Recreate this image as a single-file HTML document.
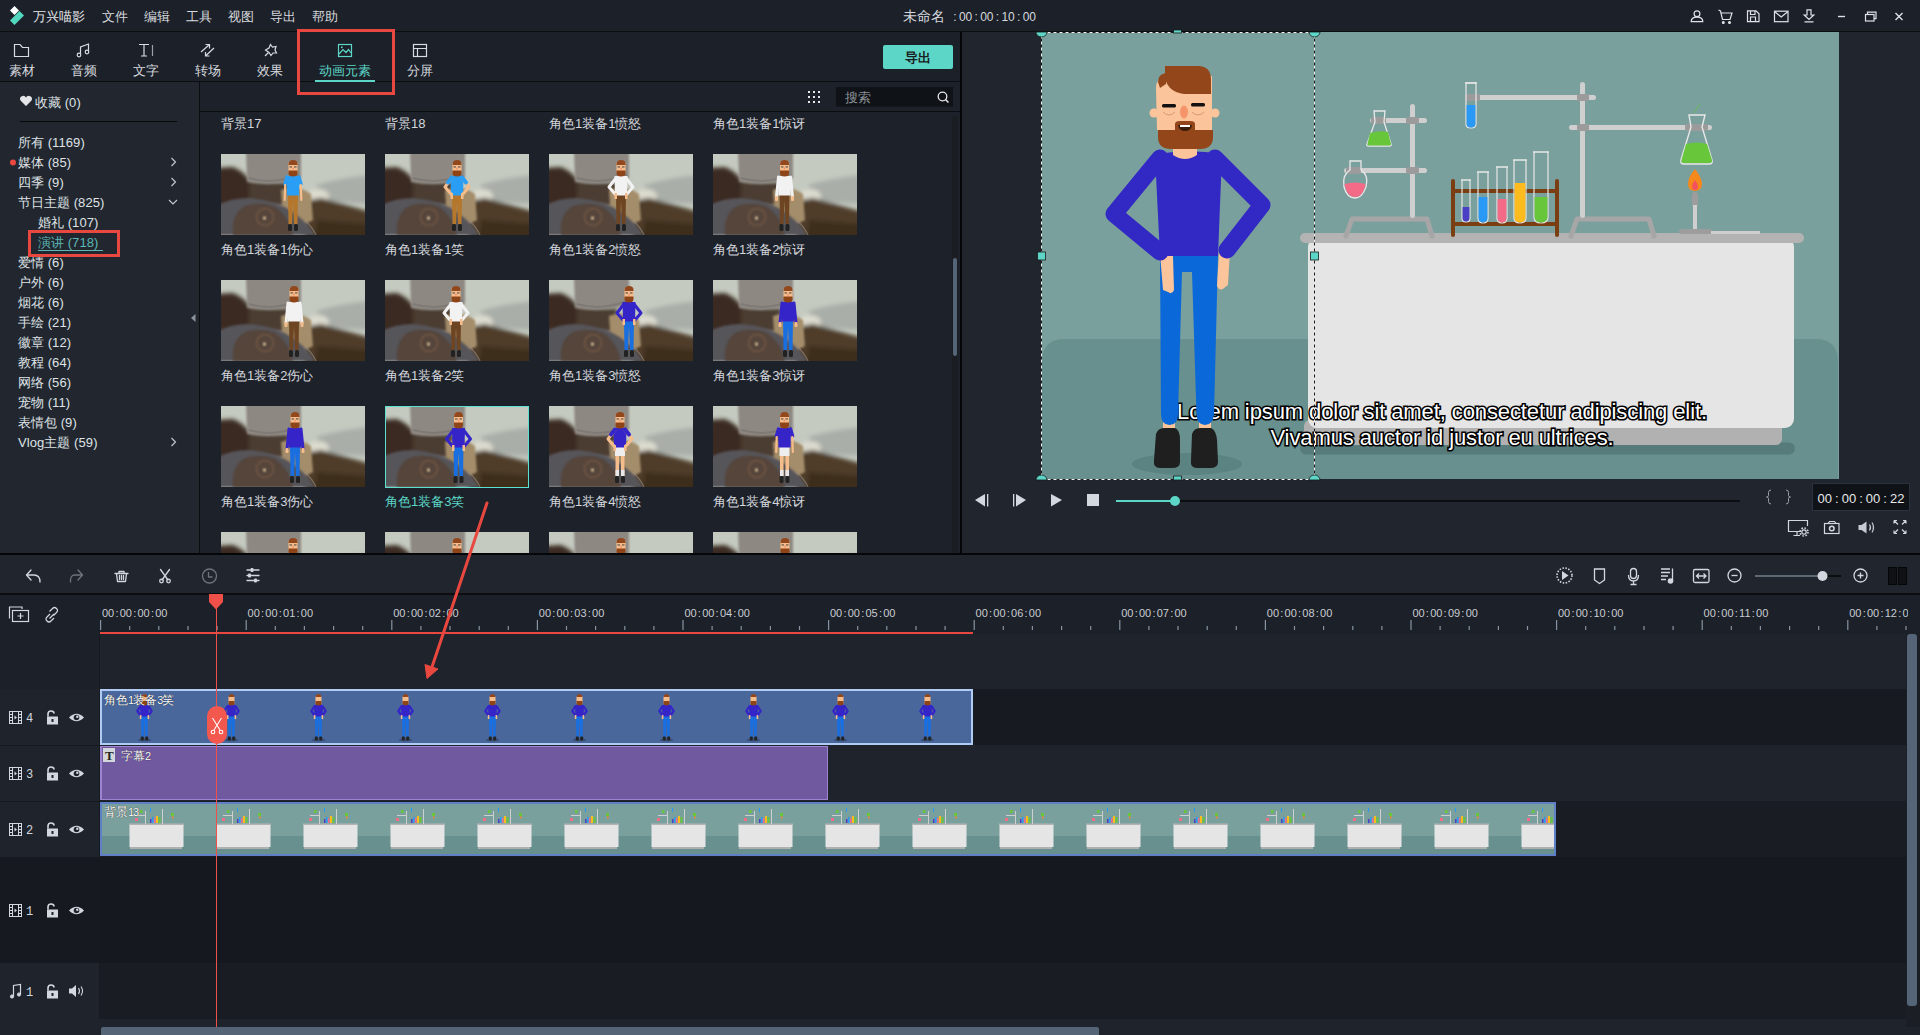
<!DOCTYPE html>
<html><head><meta charset="utf-8">
<style>
*{box-sizing:border-box;margin:0;padding:0}
html,body{width:1920px;height:1035px;overflow:hidden;background:#1c2029;font-family:"Liberation Sans",sans-serif;color:#d6d9de;font-size:13px}
.a{position:absolute}
.lb{color:#d4d7dc}
.tl{font-family:"Liberation Sans",sans-serif;font-size:11px;letter-spacing:0;color:#c9cdd3}
.tn{font-family:"Liberation Mono",monospace;font-size:12px;color:#d3d8de}
.m{font-family:"Liberation Sans",sans-serif;font-size:13px;letter-spacing:0.1px}
.t{position:absolute;white-space:nowrap;line-height:1}
svg{position:absolute;overflow:visible}
</style></head><body>
<svg width="0" height="0" style="position:absolute">
<defs>
<filter id="bl" x="-20%" y="-20%" width="140%" height="140%"><feGaussianBlur stdDeviation="2"/></filter>
<filter id="bl2" x="-20%" y="-20%" width="140%" height="140%"><feGaussianBlur stdDeviation="0.8"/></filter>
<clipPath id="pc"><rect width="144" height="81"/></clipPath>
<symbol id="photo" viewBox="0 0 144 81" width="144" height="81">
<g clip-path="url(#pc)">
<rect width="144" height="81" fill="#c4cac0"/>
<g filter="url(#bl)">
 <path d="M-5 14 L12 13 Q24 18 30 28 L32 60 L-5 60Z" fill="#3a2c20"/>
 <path d="M96 31 Q118 24 150 21 L150 50 L96 47Z" fill="#a9aea8"/>
 <ellipse cx="97" cy="42" rx="11" ry="7" fill="#dcdbcf"/>
 <path d="M84 47 L100 44 L150 58 L150 90 L84 90Z" fill="#4f3d2c"/>
 <path d="M96 66 L150 70 L150 90 L92 90Z" fill="#3d2d1f"/>
 <path d="M28 26 L68 28 L70 52 L28 52Z" fill="#4b3c31"/>
</g>
<path d="M60 36 Q76 30 90 40 L92 66 Q80 74 62 66Z" fill="#a48d6a" filter="url(#bl2)"/>
<path d="M-3 51 Q10 44 28 44 Q55 46 72 58 Q88 70 94 81 L-3 81Z" fill="#57555a" filter="url(#bl2)"/>
<path d="M12 81 Q10 60 24 52 Q40 47 54 53 Q68 62 72 81Z" fill="#54453b" filter="url(#bl2)"/>
<path d="M25 -3 H80 L80 24 Q55 34 26 28Z" fill="#8d8882" filter="url(#bl2)"/>
<path d="M28 24 Q52 31 78 21" stroke="#77726c" stroke-width="2" fill="none" opacity="0.6"/>
<path d="M84 66 Q92 74 95 81" stroke="#9a8e80" stroke-width="1.2" fill="none" opacity="0.6"/>
<circle cx="44" cy="63" r="8.5" fill="none" stroke="#9a6e50" stroke-width="2" opacity="0.35" filter="url(#bl2)"/>
<circle cx="43.5" cy="64" r="1.5" fill="#f0d8a8" filter="url(#bl2)"/>
</g>
</symbol>
</defs></svg>

<!-- ============ MENU BAR ============ -->
<div class="a" style="left:0;top:0;width:1920px;height:31px;background:#1c2029"></div>
<div class="a" style="left:0;top:31px;width:1920px;height:1px;background:#0b0d10"></div>
<!-- logo -->
<svg style="left:0;top:0" width="40" height="31"><path d="M14.5 6 L19 10.5 L14.5 15 L10 10.5Z" fill="#fff"/><path d="M19.5 11 L24 15.5 L14.5 25 L10 20.5Z" fill="#52d8bf"/></svg>
<div id="menu">
<span class="t" style="left:33px;top:10px;color:#e6e8ea">万兴喵影</span>
<span class="t" style="left:102px;top:10px">文件</span>
<span class="t" style="left:144px;top:10px">编辑</span>
<span class="t" style="left:186px;top:10px">工具</span>
<span class="t" style="left:228px;top:10px">视图</span>
<span class="t" style="left:270px;top:10px">导出</span>
<span class="t" style="left:312px;top:10px">帮助</span>
</div>
<span class="t" style="left:903px;top:10px;font-size:13.5px">未命名</span><span class="t" style="left:951px;top:11px;font-size:12px"><i style="display:inline-block;width:7.9px;text-align:center;font-style:normal">:</i>00<i style="display:inline-block;width:7.9px;text-align:center;font-style:normal">:</i>00<i style="display:inline-block;width:7.9px;text-align:center;font-style:normal">:</i>10<i style="display:inline-block;width:7.9px;text-align:center;font-style:normal">:</i>00</span>
<svg style="left:1680px;top:0" width="240" height="31" fill="none" stroke="#dfe2e6" stroke-width="1.2">
 <circle cx="17" cy="13.8" r="2.9"/><path d="M11.2 21.6 Q11.2 17.2 17 17.2 Q22.8 17.2 22.8 21.6 Z"/>
 <path d="M38.5 10 L40.5 11 L42.5 19.5 H50 L52 13 H41"/><circle cx="43.3" cy="22.5" r="0.9" fill="#dfe2e6"/><circle cx="49.5" cy="22.5" r="0.9" fill="#dfe2e6"/>
 <path d="M67.5 10.8 H76 L79 13.8 V21.7 H67.5 Z M70.5 10.8 V14.5 H75 V10.8 M70.5 21.7 V17 H75.5 V21.7"/>
 <rect x="94.5" y="11.2" width="13.5" height="10.5"/><path d="M94.5 11.5 L101.25 17 L108 11.5"/>
 <path d="M127 9.8 H131 V15 H133.8 L129 19.5 L124.2 15 H127 Z M124.5 21.8 H133.5"/>
 <path d="M158 16.5 H165" stroke-width="1.4"/>
 <rect x="185.5" y="14.5" width="8.5" height="6.5"/><path d="M187.5 14.5 V12.2 H196 V18.7 H194"/>
 <path d="M215.5 13 L222.5 20 M222.5 13 L215.5 20" stroke-width="1.4"/>
</svg>

<!-- ============ TOOLBAR ============ -->
<div class="a" style="left:0;top:81px;width:960px;height:1px;background:#0b0d10"></div>
<svg style="left:0;top:0" width="960" height="82" fill="none" stroke="#d8dbe0" stroke-width="1.2">
 <!-- folder -->
 <path d="M14.5 44.5 H20 L22.5 47.5 H28.5 V56.5 H14.5 Z"/>
 <!-- note -->
 <path d="M80.5 54 V47 L88.5 44 V51.5"/>
 <circle cx="79" cy="55" r="1.8"/><circle cx="87" cy="52" r="1.8"/>
 <!-- T| -->
 <path d="M139 44.5 H149 M144 44.5 V56 M141 56 H147"/><path d="M152.5 45 V56" stroke="#9aa0a8"/>
 <!-- transition -->
 <path d="M201 52 L209.5 44.5 M205.5 44.5 H209.5 V48.5 M214 48 L205.5 56 M205.5 52 V56 H209.5"/>
 <!-- effects wand star -->
 <path d="M270.5 44.5 L272.5 47 L276 46.5 L275 50 L276.5 53 L273 53 L271 55.5 L269 52.5 L265.5 50 L269 48 Z"/><path d="M265 56 L268.5 52.5"/>
 <!-- image (active) -->
 <g stroke="#5cd6c6"><rect x="338.5" y="44.5" width="13" height="12"/><path d="M339 54 L343 49.5 L346 52.5 L348.5 49.5 L351 53"/></g>
 <rect x="341" y="46.5" width="1.6" height="1.6" fill="#5cd6c6" stroke="none"/>
 <!-- split -->
 <rect x="413.5" y="44.5" width="13" height="12"/><path d="M413.5 48.5 H426.5 M417.5 48.5 V56.5"/>
</svg>
<span class="t" style="left:9px;top:64px">素材</span>
<span class="t" style="left:71px;top:64px">音频</span>
<span class="t" style="left:133px;top:64px">文字</span>
<span class="t" style="left:195px;top:64px">转场</span>
<span class="t" style="left:257px;top:64px">效果</span>
<span class="t" style="left:319px;top:64px;color:#5cd6c6">动画元素</span>
<span class="t" style="left:407px;top:64px">分屏</span>
<div class="a" style="left:315px;top:80px;width:60px;height:2px;background:#5cd6c6"></div>
<!-- export btn -->
<div class="a" style="left:883px;top:45px;width:70px;height:24px;background:#5cd6c6;border-radius:2px"></div>
<span class="t" style="left:905px;top:51px;color:#1a1d22;font-weight:bold">导出</span>

<!-- ============ LEFT PANEL ============ -->
<div class="a" style="left:0;top:82px;width:199px;height:471px;background:#22272f"></div>
<div class="a" style="left:199px;top:82px;width:1px;height:471px;background:#0b0d10"></div>
<svg style="left:0;top:82px" width="199" height="471">
 <path d="M26 106 L20.5 100.5 A3 3 0 0 1 26 97.5 A3 3 0 0 1 31.5 100.5 Z" transform="translate(0,-82)" fill="#e3e5e8"/>
 <rect x="20" y="39" width="157" height="1" fill="#07080a"/>
 <circle cx="13" cy="80.5" r="3" fill="#e8483f"/>
 <g fill="none" stroke="#c8ccd2" stroke-width="1.1">
  <path d="M171.5 76 L175.5 80 L171.5 84"/>
  <path d="M171.5 96 L175.5 100 L171.5 104"/>
  <path d="M169 118 L173 122 L177 118"/>
  <path d="M171.5 356 L175.5 360 L171.5 364"/>
 </g>
 <path d="M195.5 232 V240 L191 236 Z" fill="#8c929a"/>
</svg>
<div id="lp" style="color:#dfe2e6">
<span class="t" style="left:35px;top:96px">收藏 <span class="m">(0)</span></span>
<span class="t" style="left:18px;top:136px">所有 <span class="m">(1169)</span></span>
<span class="t" style="left:18px;top:156px">媒体 <span class="m">(85)</span></span>
<span class="t" style="left:18px;top:176px">四季 <span class="m">(9)</span></span>
<span class="t" style="left:18px;top:196px">节日主题 <span class="m">(825)</span></span>
<span class="t" style="left:38px;top:216px">婚礼 <span class="m">(107)</span></span>
<span class="t" style="left:38px;top:236px;color:#5bb8b6">演讲 <span class="m">(718)</span></span>
<span class="t" style="left:18px;top:256px">爱情 <span class="m">(6)</span></span>
<span class="t" style="left:18px;top:276px">户外 <span class="m">(6)</span></span>
<span class="t" style="left:18px;top:296px">烟花 <span class="m">(6)</span></span>
<span class="t" style="left:18px;top:316px">手绘 <span class="m">(21)</span></span>
<span class="t" style="left:18px;top:336px">徽章 <span class="m">(12)</span></span>
<span class="t" style="left:18px;top:356px">教程 <span class="m">(64)</span></span>
<span class="t" style="left:18px;top:376px">网络 <span class="m">(56)</span></span>
<span class="t" style="left:18px;top:396px">宠物 <span class="m">(11)</span></span>
<span class="t" style="left:18px;top:416px">表情包 <span class="m">(9)</span></span>
<span class="t" style="left:18px;top:436px"><span class="m">Vlog</span>主题 <span class="m">(59)</span></span>
</div>
<div class="a" style="left:38px;top:250px;width:65px;height:1px;background:#5bb8b6"></div>

<!-- ============ CONTENT PANEL ============ -->
<div class="a" style="left:200px;top:82px;width:760px;height:471px;background:#1d2129"></div>
<div class="a" style="left:200px;top:111px;width:760px;height:1px;background:#0b0d10"></div>
<svg style="left:800px;top:82px" width="160" height="30">
 <g fill="#e6e8ea"><rect x="8" y="9" width="2" height="2"/><rect x="13" y="9" width="2" height="2"/><rect x="18" y="9" width="2" height="2"/><rect x="8" y="14" width="2" height="2"/><rect x="13" y="14" width="2" height="2"/><rect x="18" y="14" width="2" height="2"/><rect x="8" y="19" width="2" height="2"/><rect x="13" y="19" width="2" height="2"/><rect x="18" y="19" width="2" height="2"/></g>
 <rect x="36" y="5" width="117" height="19.5" fill="#0f1216"/>
 <circle cx="142.5" cy="14.5" r="4.3" fill="none" stroke="#e6e8ea" stroke-width="1.3"/><path d="M145.5 17.5 L148.5 20.5" stroke="#e6e8ea" stroke-width="1.5"/>
</svg>
<span class="t" style="left:845px;top:91px;color:#8e9298">搜索</span>
<div class="a" style="left:952px;top:116px;width:6px;height:437px;background:#1a1d21"></div>
<div class="a" style="left:953px;top:258px;width:4px;height:98px;background:#566478;border-radius:2px"></div>
<div id="grid">
<span class="t lb" style="left:221px;top:117px">背景17</span>
<span class="t lb" style="left:385px;top:117px">背景18</span>
<span class="t lb" style="left:549px;top:117px">角色1装备1愤怒</span>
<span class="t lb" style="left:713px;top:117px">角色1装备1惊讶</span>
<svg style="left:221px;top:154px" width="144" height="81"><use href="#photo"/><path d="M67 41 H77 L76.5 70 H73 L72 47 L71 70 H67.5 Z" fill="#b4772c"/><rect x="67" y="70" width="4" height="7" rx="1.5" fill="#222"/><rect x="73" y="70" width="4" height="7" rx="1.5" fill="#222"/><path d="M65.5 22 H78.5 L78 41.5 H66 Z" fill="#2a9df4"/><path d="M66 23 L64 30" stroke="#2a9df4" stroke-width="3.5" stroke-linecap="round"/><path d="M78 23 L80 30" stroke="#2a9df4" stroke-width="3.5" stroke-linecap="round"/><path d="M64.2 31 L63.7 46" stroke="#f6bd8c" stroke-width="2.2" stroke-linecap="round"/><path d="M79.8 31 L80.3 46" stroke="#f6bd8c" stroke-width="2.2" stroke-linecap="round"/><rect x="67.5" y="8" width="9" height="11" rx="1.5" fill="#f6bd8c"/><path d="M67.5 11 Q67.5 6 72 6 Q76.5 6 76.5 10 V11 H69 Z" fill="#93471c"/><path d="M67.5 16.5 H76.5 V19 Q76.5 22.5 72 22.5 Q67.5 22.5 67.5 19 Z" fill="#8f4418"/><rect x="68.5" y="12.5" width="2.5" height="0.9" fill="#333"/><rect x="73" y="12.5" width="2.5" height="0.9" fill="#333"/><rect x="71.3" y="13.5" width="1.4" height="2" fill="#f0906a"/></svg>
<span class="t lb" style="left:221px;top:243px">角色1装备1伤心</span>
<svg style="left:385px;top:154px" width="144" height="81"><use href="#photo"/><path d="M67 41 H77 L76.5 70 H73 L72 47 L71 70 H67.5 Z" fill="#b4772c"/><rect x="67" y="70" width="4" height="7" rx="1.5" fill="#222"/><rect x="73" y="70" width="4" height="7" rx="1.5" fill="#222"/><path d="M65.5 22 H78.5 L78 41.5 H66 Z" fill="#2a9df4"/><path d="M67 24 L60 33 L66 40" stroke="#f6bd8c" stroke-width="3" fill="none" stroke-linejoin="round" stroke-linecap="round"/><path d="M77 24 L84 33 L78 40" stroke="#f6bd8c" stroke-width="3" fill="none" stroke-linejoin="round" stroke-linecap="round"/><path d="M67 23.5 L63 28.5 M77 23.5 L81 28.5" stroke="#2a9df4" stroke-width="4" stroke-linecap="round"/><rect x="65.5" y="39" width="2.5" height="6" fill="#f6bd8c"/><rect x="76" y="39" width="2.5" height="6" fill="#f6bd8c"/><rect x="67.5" y="8" width="9" height="11" rx="1.5" fill="#f6bd8c"/><path d="M67.5 11 Q67.5 6 72 6 Q76.5 6 76.5 10 V11 H69 Z" fill="#93471c"/><path d="M67.5 16.5 H76.5 V19 Q76.5 22.5 72 22.5 Q67.5 22.5 67.5 19 Z" fill="#8f4418"/><rect x="68.5" y="12.5" width="2.5" height="0.9" fill="#333"/><rect x="73" y="12.5" width="2.5" height="0.9" fill="#333"/><rect x="71.3" y="13.5" width="1.4" height="2" fill="#f0906a"/></svg>
<span class="t lb" style="left:385px;top:243px">角色1装备1笑</span>
<svg style="left:549px;top:154px" width="144" height="81"><use href="#photo"/><path d="M67 41 H77 L76.5 70 H73 L72 47 L71 70 H67.5 Z" fill="#6e4522"/><rect x="67" y="70" width="4" height="7" rx="1.5" fill="#222"/><rect x="73" y="70" width="4" height="7" rx="1.5" fill="#222"/><path d="M65.5 22 H78.5 L78 41.5 H66 Z" fill="#f2f2f2"/><path d="M67 24 L60 33 L66 40" stroke="#f2f2f2" stroke-width="3" fill="none" stroke-linejoin="round" stroke-linecap="round"/><path d="M77 24 L84 33 L78 40" stroke="#f2f2f2" stroke-width="3" fill="none" stroke-linejoin="round" stroke-linecap="round"/><rect x="65.5" y="39" width="2.5" height="6" fill="#f6bd8c"/><rect x="76" y="39" width="2.5" height="6" fill="#f6bd8c"/><rect x="67.5" y="8" width="9" height="11" rx="1.5" fill="#f6bd8c"/><path d="M67.5 11 Q67.5 6 72 6 Q76.5 6 76.5 10 V11 H69 Z" fill="#93471c"/><path d="M67.5 16.5 H76.5 V19 Q76.5 22.5 72 22.5 Q67.5 22.5 67.5 19 Z" fill="#8f4418"/><rect x="68.5" y="12.5" width="2.5" height="0.9" fill="#333"/><rect x="73" y="12.5" width="2.5" height="0.9" fill="#333"/><rect x="71.3" y="13.5" width="1.4" height="2" fill="#f0906a"/></svg>
<span class="t lb" style="left:549px;top:243px">角色1装备2愤怒</span>
<svg style="left:713px;top:154px" width="144" height="81"><use href="#photo"/><path d="M66.5 41 H76.5 L76.0 70 H72.5 L71.5 47 L70.5 70 H67.0 Z" fill="#6e4522"/><rect x="66.5" y="70" width="4" height="7" rx="1.5" fill="#222"/><rect x="72.5" y="70" width="4" height="7" rx="1.5" fill="#222"/><path d="M65.0 22 H78.0 L77.5 41.5 H65.5 Z" fill="#f2f2f2"/><path d="M65.5 23 L63.5 43" stroke="#f2f2f2" stroke-width="3" stroke-linecap="round"/><path d="M77.5 23 L79.5 43" stroke="#f2f2f2" stroke-width="3" stroke-linecap="round"/><rect x="62.0" y="42" width="3" height="5" rx="1" fill="#f6bd8c"/><rect x="78.0" y="42" width="3" height="5" rx="1" fill="#f6bd8c"/><rect x="67.0" y="8" width="9" height="11" rx="1.5" fill="#f6bd8c"/><path d="M67.0 11 Q67.0 6 71.5 6 Q76.0 6 76.0 10 V11 H68.5 Z" fill="#93471c"/><path d="M67.0 16.5 H76.0 V19 Q76.0 22.5 71.5 22.5 Q67.0 22.5 67.0 19 Z" fill="#8f4418"/><rect x="68.0" y="12.5" width="2.5" height="0.9" fill="#333"/><rect x="72.5" y="12.5" width="2.5" height="0.9" fill="#333"/><rect x="70.8" y="13.5" width="1.4" height="2" fill="#f0906a"/></svg>
<span class="t lb" style="left:713px;top:243px">角色1装备2惊讶</span>
<svg style="left:221px;top:280px" width="144" height="81"><use href="#photo"/><path d="M68 41 H78 L77.5 70 H74 L73 47 L72 70 H68.5 Z" fill="#6e4522"/><rect x="68" y="70" width="4" height="7" rx="1.5" fill="#222"/><rect x="74" y="70" width="4" height="7" rx="1.5" fill="#222"/><path d="M66.5 22 H79.5 L79 41.5 H67 Z" fill="#f2f2f2"/><path d="M67 23 L65 43" stroke="#f2f2f2" stroke-width="3" stroke-linecap="round"/><path d="M79 23 L81 43" stroke="#f2f2f2" stroke-width="3" stroke-linecap="round"/><rect x="63.5" y="42" width="3" height="5" rx="1" fill="#f6bd8c"/><rect x="79.5" y="42" width="3" height="5" rx="1" fill="#f6bd8c"/><rect x="68.5" y="8" width="9" height="11" rx="1.5" fill="#f6bd8c"/><path d="M68.5 11 Q68.5 6 73 6 Q77.5 6 77.5 10 V11 H70 Z" fill="#93471c"/><path d="M68.5 16.5 H77.5 V19 Q77.5 22.5 73 22.5 Q68.5 22.5 68.5 19 Z" fill="#8f4418"/><rect x="69.5" y="12.5" width="2.5" height="0.9" fill="#333"/><rect x="74" y="12.5" width="2.5" height="0.9" fill="#333"/><rect x="72.3" y="13.5" width="1.4" height="2" fill="#f0906a"/></svg>
<span class="t lb" style="left:221px;top:369px">角色1装备2伤心</span>
<svg style="left:385px;top:280px" width="144" height="81"><use href="#photo"/><path d="M66 41 H76 L75.5 70 H72 L71 47 L70 70 H66.5 Z" fill="#6e4522"/><rect x="66" y="70" width="4" height="7" rx="1.5" fill="#222"/><rect x="72" y="70" width="4" height="7" rx="1.5" fill="#222"/><path d="M64.5 22 H77.5 L77 41.5 H65 Z" fill="#f2f2f2"/><path d="M66 24 L59 33 L65 40" stroke="#f2f2f2" stroke-width="3" fill="none" stroke-linejoin="round" stroke-linecap="round"/><path d="M76 24 L83 33 L77 40" stroke="#f2f2f2" stroke-width="3" fill="none" stroke-linejoin="round" stroke-linecap="round"/><rect x="64.5" y="39" width="2.5" height="6" fill="#f6bd8c"/><rect x="75" y="39" width="2.5" height="6" fill="#f6bd8c"/><rect x="66.5" y="8" width="9" height="11" rx="1.5" fill="#f6bd8c"/><path d="M66.5 11 Q66.5 6 71 6 Q75.5 6 75.5 10 V11 H68 Z" fill="#93471c"/><path d="M66.5 16.5 H75.5 V19 Q75.5 22.5 71 22.5 Q66.5 22.5 66.5 19 Z" fill="#8f4418"/><rect x="67.5" y="12.5" width="2.5" height="0.9" fill="#333"/><rect x="72" y="12.5" width="2.5" height="0.9" fill="#333"/><rect x="70.3" y="13.5" width="1.4" height="2" fill="#f0906a"/></svg>
<span class="t lb" style="left:385px;top:369px">角色1装备2笑</span>
<svg style="left:549px;top:280px" width="144" height="81"><use href="#photo"/><path d="M75 41 H85 L84.5 70 H81 L80 47 L79 70 H75.5 Z" fill="#1a6fe0"/><rect x="75" y="70" width="4" height="7" rx="1.5" fill="#222"/><rect x="81" y="70" width="4" height="7" rx="1.5" fill="#222"/><path d="M73.5 22 H86.5 L86 41.5 H74 Z" fill="#3524c8"/><path d="M75 24 L68 33 L74 40" stroke="#3524c8" stroke-width="3" fill="none" stroke-linejoin="round" stroke-linecap="round"/><path d="M85 24 L92 33 L86 40" stroke="#3524c8" stroke-width="3" fill="none" stroke-linejoin="round" stroke-linecap="round"/><rect x="73.5" y="39" width="2.5" height="6" fill="#f6bd8c"/><rect x="84" y="39" width="2.5" height="6" fill="#f6bd8c"/><rect x="75.5" y="8" width="9" height="11" rx="1.5" fill="#f6bd8c"/><path d="M75.5 11 Q75.5 6 80 6 Q84.5 6 84.5 10 V11 H77 Z" fill="#93471c"/><path d="M75.5 16.5 H84.5 V19 Q84.5 22.5 80 22.5 Q75.5 22.5 75.5 19 Z" fill="#8f4418"/><rect x="76.5" y="12.5" width="2.5" height="0.9" fill="#333"/><rect x="81" y="12.5" width="2.5" height="0.9" fill="#333"/><rect x="79.3" y="13.5" width="1.4" height="2" fill="#f0906a"/></svg>
<span class="t lb" style="left:549px;top:369px">角色1装备3愤怒</span>
<svg style="left:713px;top:280px" width="144" height="81"><use href="#photo"/><path d="M70 41 H80 L79.5 70 H76 L75 47 L74 70 H70.5 Z" fill="#1a6fe0"/><rect x="70" y="70" width="4" height="7" rx="1.5" fill="#222"/><rect x="76" y="70" width="4" height="7" rx="1.5" fill="#222"/><path d="M68.5 22 H81.5 L81 41.5 H69 Z" fill="#3524c8"/><path d="M69 23 L67 43" stroke="#3524c8" stroke-width="3" stroke-linecap="round"/><path d="M81 23 L83 43" stroke="#3524c8" stroke-width="3" stroke-linecap="round"/><rect x="65.5" y="42" width="3" height="5" rx="1" fill="#f6bd8c"/><rect x="81.5" y="42" width="3" height="5" rx="1" fill="#f6bd8c"/><rect x="70.5" y="8" width="9" height="11" rx="1.5" fill="#f6bd8c"/><path d="M70.5 11 Q70.5 6 75 6 Q79.5 6 79.5 10 V11 H72 Z" fill="#93471c"/><path d="M70.5 16.5 H79.5 V19 Q79.5 22.5 75 22.5 Q70.5 22.5 70.5 19 Z" fill="#8f4418"/><rect x="71.5" y="12.5" width="2.5" height="0.9" fill="#333"/><rect x="76" y="12.5" width="2.5" height="0.9" fill="#333"/><rect x="74.3" y="13.5" width="1.4" height="2" fill="#f0906a"/></svg>
<span class="t lb" style="left:713px;top:369px">角色1装备3惊讶</span>
<svg style="left:221px;top:406px" width="144" height="81"><use href="#photo"/><path d="M69 41 H79 L78.5 70 H75 L74 47 L73 70 H69.5 Z" fill="#1a6fe0"/><rect x="69" y="70" width="4" height="7" rx="1.5" fill="#222"/><rect x="75" y="70" width="4" height="7" rx="1.5" fill="#222"/><path d="M67.5 22 H80.5 L80 41.5 H68 Z" fill="#3524c8"/><path d="M68 23 L66 43" stroke="#3524c8" stroke-width="3" stroke-linecap="round"/><path d="M80 23 L82 43" stroke="#3524c8" stroke-width="3" stroke-linecap="round"/><rect x="64.5" y="42" width="3" height="5" rx="1" fill="#f6bd8c"/><rect x="80.5" y="42" width="3" height="5" rx="1" fill="#f6bd8c"/><rect x="69.5" y="8" width="9" height="11" rx="1.5" fill="#f6bd8c"/><path d="M69.5 11 Q69.5 6 74 6 Q78.5 6 78.5 10 V11 H71 Z" fill="#93471c"/><path d="M69.5 16.5 H78.5 V19 Q78.5 22.5 74 22.5 Q69.5 22.5 69.5 19 Z" fill="#8f4418"/><rect x="70.5" y="12.5" width="2.5" height="0.9" fill="#333"/><rect x="75" y="12.5" width="2.5" height="0.9" fill="#333"/><rect x="73.3" y="13.5" width="1.4" height="2" fill="#f0906a"/></svg>
<span class="t lb" style="left:221px;top:495px">角色1装备3伤心</span>
<svg style="left:385px;top:406px" width="144" height="81"><use href="#photo"/><path d="M68.5 41 H78.5 L78.0 70 H74.5 L73.5 47 L72.5 70 H69.0 Z" fill="#1a6fe0"/><rect x="68.5" y="70" width="4" height="7" rx="1.5" fill="#222"/><rect x="74.5" y="70" width="4" height="7" rx="1.5" fill="#222"/><path d="M67.0 22 H80.0 L79.5 41.5 H67.5 Z" fill="#3524c8"/><path d="M68.5 24 L61.5 33 L67.5 40" stroke="#3524c8" stroke-width="3" fill="none" stroke-linejoin="round" stroke-linecap="round"/><path d="M78.5 24 L85.5 33 L79.5 40" stroke="#3524c8" stroke-width="3" fill="none" stroke-linejoin="round" stroke-linecap="round"/><rect x="67.0" y="39" width="2.5" height="6" fill="#f6bd8c"/><rect x="77.5" y="39" width="2.5" height="6" fill="#f6bd8c"/><rect x="69.0" y="8" width="9" height="11" rx="1.5" fill="#f6bd8c"/><path d="M69.0 11 Q69.0 6 73.5 6 Q78.0 6 78.0 10 V11 H70.5 Z" fill="#93471c"/><path d="M69.0 16.5 H78.0 V19 Q78.0 22.5 73.5 22.5 Q69.0 22.5 69.0 19 Z" fill="#8f4418"/><rect x="70.0" y="12.5" width="2.5" height="0.9" fill="#333"/><rect x="74.5" y="12.5" width="2.5" height="0.9" fill="#333"/><rect x="72.8" y="13.5" width="1.4" height="2" fill="#f0906a"/></svg>
<div class="a" style="left:385px;top:406px;width:144px;height:82px;border:1px solid #5ce0d0"></div>
<span class="t lb" style="left:385px;top:495px;color:#5cd6c6">角色1装备3笑</span>
<svg style="left:549px;top:406px" width="144" height="81"><use href="#photo"/><rect x="66" y="41" width="10" height="9" fill="#eeeeee"/><rect x="66.5" y="50" width="3.5" height="20" fill="#f6bd8c"/><rect x="72" y="50" width="3.5" height="20" fill="#f6bd8c"/><rect x="66.5" y="64" width="3.5" height="6" fill="#e8e8e8"/><rect x="72" y="64" width="3.5" height="6" fill="#e8e8e8"/><rect x="66" y="70" width="4" height="7" rx="1.5" fill="#222"/><rect x="72" y="70" width="4" height="7" rx="1.5" fill="#222"/><path d="M64.5 22 H77.5 L77 41.5 H65 Z" fill="#3524c8"/><path d="M66 24 L59 33 L65 40" stroke="#f6bd8c" stroke-width="3" fill="none" stroke-linejoin="round" stroke-linecap="round"/><path d="M76 24 L83 33 L77 40" stroke="#f6bd8c" stroke-width="3" fill="none" stroke-linejoin="round" stroke-linecap="round"/><path d="M66 23.5 L62 28.5 M76 23.5 L80 28.5" stroke="#3524c8" stroke-width="4" stroke-linecap="round"/><rect x="64.5" y="39" width="2.5" height="6" fill="#f6bd8c"/><rect x="75" y="39" width="2.5" height="6" fill="#f6bd8c"/><rect x="66.5" y="8" width="9" height="11" rx="1.5" fill="#f6bd8c"/><path d="M66.5 11 Q66.5 6 71 6 Q75.5 6 75.5 10 V11 H68 Z" fill="#93471c"/><path d="M66.5 16.5 H75.5 V19 Q75.5 22.5 71 22.5 Q66.5 22.5 66.5 19 Z" fill="#8f4418"/><rect x="67.5" y="12.5" width="2.5" height="0.9" fill="#333"/><rect x="72" y="12.5" width="2.5" height="0.9" fill="#333"/><rect x="70.3" y="13.5" width="1.4" height="2" fill="#f0906a"/></svg>
<span class="t lb" style="left:549px;top:495px">角色1装备4愤怒</span>
<svg style="left:713px;top:406px" width="144" height="81"><use href="#photo"/><rect x="66.5" y="41" width="10" height="9" fill="#eeeeee"/><rect x="67.0" y="50" width="3.5" height="20" fill="#f6bd8c"/><rect x="72.5" y="50" width="3.5" height="20" fill="#f6bd8c"/><rect x="67.0" y="64" width="3.5" height="6" fill="#e8e8e8"/><rect x="72.5" y="64" width="3.5" height="6" fill="#e8e8e8"/><rect x="66.5" y="70" width="4" height="7" rx="1.5" fill="#222"/><rect x="72.5" y="70" width="4" height="7" rx="1.5" fill="#222"/><path d="M65.0 22 H78.0 L77.5 41.5 H65.5 Z" fill="#3524c8"/><path d="M65.5 23 L63.5 30" stroke="#3524c8" stroke-width="3.5" stroke-linecap="round"/><path d="M77.5 23 L79.5 30" stroke="#3524c8" stroke-width="3.5" stroke-linecap="round"/><path d="M63.7 31 L63.2 46" stroke="#f6bd8c" stroke-width="2.2" stroke-linecap="round"/><path d="M79.3 31 L79.8 46" stroke="#f6bd8c" stroke-width="2.2" stroke-linecap="round"/><rect x="67.0" y="8" width="9" height="11" rx="1.5" fill="#f6bd8c"/><path d="M67.0 11 Q67.0 6 71.5 6 Q76.0 6 76.0 10 V11 H68.5 Z" fill="#93471c"/><path d="M67.0 16.5 H76.0 V19 Q76.0 22.5 71.5 22.5 Q67.0 22.5 67.0 19 Z" fill="#8f4418"/><rect x="68.0" y="12.5" width="2.5" height="0.9" fill="#333"/><rect x="72.5" y="12.5" width="2.5" height="0.9" fill="#333"/><rect x="70.8" y="13.5" width="1.4" height="2" fill="#f0906a"/></svg>
<span class="t lb" style="left:713px;top:495px">角色1装备4惊讶</span>
<div class="a" style="left:221px;top:532px;width:144px;height:21px;overflow:hidden"><svg style="left:0;top:0" width="144" height="81"><use href="#photo"/><path d="M67 41 H77 L76.5 70 H73 L72 47 L71 70 H67.5 Z" fill="#1a6fe0"/><rect x="67" y="70" width="4" height="7" rx="1.5" fill="#222"/><rect x="73" y="70" width="4" height="7" rx="1.5" fill="#222"/><path d="M65.5 22 H78.5 L78 41.5 H66 Z" fill="#3524c8"/><path d="M66 23 L64 43" stroke="#3524c8" stroke-width="3" stroke-linecap="round"/><path d="M78 23 L80 43" stroke="#3524c8" stroke-width="3" stroke-linecap="round"/><rect x="62.5" y="42" width="3" height="5" rx="1" fill="#f6bd8c"/><rect x="78.5" y="42" width="3" height="5" rx="1" fill="#f6bd8c"/><rect x="67.5" y="8" width="9" height="11" rx="1.5" fill="#f6bd8c"/><path d="M67.5 11 Q67.5 6 72 6 Q76.5 6 76.5 10 V11 H69 Z" fill="#93471c"/><path d="M67.5 16.5 H76.5 V19 Q76.5 22.5 72 22.5 Q67.5 22.5 67.5 19 Z" fill="#8f4418"/><rect x="68.5" y="12.5" width="2.5" height="0.9" fill="#333"/><rect x="73" y="12.5" width="2.5" height="0.9" fill="#333"/><rect x="71.3" y="13.5" width="1.4" height="2" fill="#f0906a"/></svg></div>
<div class="a" style="left:385px;top:532px;width:144px;height:21px;overflow:hidden"><svg style="left:0;top:0" width="144" height="81"><use href="#photo"/><path d="M67 41 H77 L76.5 70 H73 L72 47 L71 70 H67.5 Z" fill="#1a6fe0"/><rect x="67" y="70" width="4" height="7" rx="1.5" fill="#222"/><rect x="73" y="70" width="4" height="7" rx="1.5" fill="#222"/><path d="M65.5 22 H78.5 L78 41.5 H66 Z" fill="#3524c8"/><path d="M66 23 L64 43" stroke="#3524c8" stroke-width="3" stroke-linecap="round"/><path d="M78 23 L80 43" stroke="#3524c8" stroke-width="3" stroke-linecap="round"/><rect x="62.5" y="42" width="3" height="5" rx="1" fill="#f6bd8c"/><rect x="78.5" y="42" width="3" height="5" rx="1" fill="#f6bd8c"/><rect x="67.5" y="8" width="9" height="11" rx="1.5" fill="#f6bd8c"/><path d="M67.5 11 Q67.5 6 72 6 Q76.5 6 76.5 10 V11 H69 Z" fill="#93471c"/><path d="M67.5 16.5 H76.5 V19 Q76.5 22.5 72 22.5 Q67.5 22.5 67.5 19 Z" fill="#8f4418"/><rect x="68.5" y="12.5" width="2.5" height="0.9" fill="#333"/><rect x="73" y="12.5" width="2.5" height="0.9" fill="#333"/><rect x="71.3" y="13.5" width="1.4" height="2" fill="#f0906a"/></svg></div>
<div class="a" style="left:549px;top:532px;width:144px;height:21px;overflow:hidden"><svg style="left:0;top:0" width="144" height="81"><use href="#photo"/><path d="M67 41 H77 L76.5 70 H73 L72 47 L71 70 H67.5 Z" fill="#1a6fe0"/><rect x="67" y="70" width="4" height="7" rx="1.5" fill="#222"/><rect x="73" y="70" width="4" height="7" rx="1.5" fill="#222"/><path d="M65.5 22 H78.5 L78 41.5 H66 Z" fill="#3524c8"/><path d="M66 23 L64 43" stroke="#3524c8" stroke-width="3" stroke-linecap="round"/><path d="M78 23 L80 43" stroke="#3524c8" stroke-width="3" stroke-linecap="round"/><rect x="62.5" y="42" width="3" height="5" rx="1" fill="#f6bd8c"/><rect x="78.5" y="42" width="3" height="5" rx="1" fill="#f6bd8c"/><rect x="67.5" y="8" width="9" height="11" rx="1.5" fill="#f6bd8c"/><path d="M67.5 11 Q67.5 6 72 6 Q76.5 6 76.5 10 V11 H69 Z" fill="#93471c"/><path d="M67.5 16.5 H76.5 V19 Q76.5 22.5 72 22.5 Q67.5 22.5 67.5 19 Z" fill="#8f4418"/><rect x="68.5" y="12.5" width="2.5" height="0.9" fill="#333"/><rect x="73" y="12.5" width="2.5" height="0.9" fill="#333"/><rect x="71.3" y="13.5" width="1.4" height="2" fill="#f0906a"/></svg></div>
<div class="a" style="left:713px;top:532px;width:144px;height:21px;overflow:hidden"><svg style="left:0;top:0" width="144" height="81"><use href="#photo"/><path d="M67 41 H77 L76.5 70 H73 L72 47 L71 70 H67.5 Z" fill="#1a6fe0"/><rect x="67" y="70" width="4" height="7" rx="1.5" fill="#222"/><rect x="73" y="70" width="4" height="7" rx="1.5" fill="#222"/><path d="M65.5 22 H78.5 L78 41.5 H66 Z" fill="#3524c8"/><path d="M66 23 L64 43" stroke="#3524c8" stroke-width="3" stroke-linecap="round"/><path d="M78 23 L80 43" stroke="#3524c8" stroke-width="3" stroke-linecap="round"/><rect x="62.5" y="42" width="3" height="5" rx="1" fill="#f6bd8c"/><rect x="78.5" y="42" width="3" height="5" rx="1" fill="#f6bd8c"/><rect x="67.5" y="8" width="9" height="11" rx="1.5" fill="#f6bd8c"/><path d="M67.5 11 Q67.5 6 72 6 Q76.5 6 76.5 10 V11 H69 Z" fill="#93471c"/><path d="M67.5 16.5 H76.5 V19 Q76.5 22.5 72 22.5 Q67.5 22.5 67.5 19 Z" fill="#8f4418"/><rect x="68.5" y="12.5" width="2.5" height="0.9" fill="#333"/><rect x="73" y="12.5" width="2.5" height="0.9" fill="#333"/><rect x="71.3" y="13.5" width="1.4" height="2" fill="#f0906a"/></svg></div>
</div>
<div class="a" style="left:960px;top:32px;width:2px;height:521px;background:#050607"></div>

<!-- ============ PREVIEW ============ -->
<div class="a" style="left:962px;top:32px;width:958px;height:521px;background:#20252e"></div>
<svg style="left:1042px;top:32px" width="797" height="447" viewBox="1042 32 797 447">
<defs><clipPath id="vc"><rect x="1042" y="32" width="797" height="447"/></clipPath></defs>
<g clip-path="url(#vc)">
<rect x="1042" y="32" width="797" height="447" fill="#7aa09e"/>
<path d="M1042 362 Q1042 339 1065 339 H1815 Q1838 339 1838 362 V480 H1042 Z" fill="#67908e"/>
<!-- table -->
<rect x="1300" y="442.5" width="495" height="12" rx="6" fill="#567b7a"/>
<rect x="1304" y="420" width="478" height="25" rx="6" fill="#b1b1b1"/>
<rect x="1308" y="238" width="486" height="190" rx="9" fill="#e5e5e5"/>
<rect x="1300" y="233" width="504" height="10" rx="5" fill="#b3b3b3"/>
<!-- left stand -->
<path d="M1346 236 L1352 219 H1427 L1432 236" fill="none" stroke="#a6a6a6" stroke-width="5" stroke-linejoin="round" stroke-linecap="round"/>
<rect x="1410" y="104" width="5" height="114" rx="2.5" fill="#cfcfcf"/>
<rect x="1370" y="118" width="57" height="5" rx="2.5" fill="#cfcfcf"/>
<rect x="1344" y="168" width="83" height="5" rx="2.5" fill="#cfcfcf"/>
<rect x="1371" y="117" width="15" height="7" rx="2" fill="#9b9b9b"/><rect x="1406" y="117" width="13" height="7" rx="2" fill="#9b9b9b"/>
<rect x="1346" y="167" width="15" height="7" rx="2" fill="#9b9b9b"/><rect x="1406" y="167" width="13" height="7" rx="2" fill="#9b9b9b"/>
<!-- green flask small -->
<path d="M1374 111 H1385 L1384 122 L1391 144 Q1392 146 1389 146 H1369 Q1366 146 1367 144 L1375 122 Z" fill="none" stroke="#e8e8e8" stroke-width="1.3"/>
<path d="M1370 133 Q1380 130 1388 132 L1391 144 Q1391 145.5 1389 145.5 H1369 Q1367 145.5 1367.5 144 Z" fill="#67c63a"/>
<!-- pink flask -->
<path d="M1350 161 H1361 V170 Q1369 175 1366 187 Q1362 198 1355 198 Q1347 198 1344 187 Q1342 175 1350 170 Z" fill="none" stroke="#e8e8e8" stroke-width="1.3"/>
<path d="M1344.5 184 Q1355 181 1365.5 184 Q1363 197 1355 197 Q1347 197 1344.5 184Z" fill="#f36b86"/>
<!-- rack -->
<rect x="1451" y="179" width="4" height="58" rx="2" fill="#7a3e12"/><rect x="1555" y="179" width="4" height="58" rx="2" fill="#7a3e12"/>
<rect x="1452" y="189" width="106" height="4" fill="#7a3e12"/><rect x="1452" y="222" width="106" height="4" fill="#7a3e12"/>
<g stroke="#e8e8e8" stroke-width="1.2">
<path d="M1462 180 V218 Q1462 222 1466 222 Q1470 222 1470 218 V180" fill="none"/>
<path d="M1478 172 V218 Q1478 223 1483 223 Q1488 223 1488 218 V172" fill="none"/>
<path d="M1497 167 V218 Q1497 223 1502 223 Q1507 223 1507 218 V167" fill="none"/>
<path d="M1514 160 V218 Q1514 223 1520 223 Q1526 223 1526 218 V160" fill="none"/>
<path d="M1534 152 V217 Q1534 223 1541 223 Q1548 223 1548 217 V152" fill="none"/>
</g>
<g stroke="#e8e8e8" stroke-width="1.5"><path d="M1461 180 H1471 M1477 172 H1489 M1496 167 H1508 M1513 160 H1527 M1533 152 H1549 M1465 83 H1477"/></g>
<path d="M1462.6 207 H1469.4 V218 Q1469.4 221.4 1466 221.4 Q1462.6 221.4 1462.6 218Z" fill="#4a3ec4"/>
<path d="M1478.6 197 H1487.4 V218 Q1487.4 222.4 1483 222.4 Q1478.6 222.4 1478.6 218Z" fill="#2a98f5"/>
<path d="M1497.6 199 H1506.4 V218 Q1506.4 222.4 1502 222.4 Q1497.6 222.4 1497.6 218Z" fill="#f36b86"/>
<path d="M1514.6 183 H1525.4 V218 Q1525.4 222.4 1520 222.4 Q1514.6 222.4 1514.6 218Z" fill="#fdbb1e"/>
<path d="M1534.6 197 H1547.4 V217 Q1547.4 222.4 1541 222.4 Q1534.6 222.4 1534.6 217Z" fill="#67c63a"/>
<!-- right big stand -->
<path d="M1571 236 L1577 219 H1649 L1654 236" fill="none" stroke="#a6a6a6" stroke-width="5" stroke-linejoin="round" stroke-linecap="round"/>
<rect x="1580" y="82" width="5" height="136" rx="2.5" fill="#cfcfcf"/>
<rect x="1465" y="95" width="131" height="5" rx="2.5" fill="#cfcfcf"/>
<rect x="1569" y="125" width="143" height="5" rx="2.5" fill="#cfcfcf"/>
<rect x="1465" y="94" width="15" height="7" rx="2" fill="#9b9b9b"/><rect x="1577" y="94" width="12" height="7" rx="2" fill="#9b9b9b"/>
<rect x="1577" y="124" width="12" height="7" rx="2" fill="#9b9b9b"/><rect x="1685" y="124" width="23" height="7" rx="2" fill="#9b9b9b"/>
<!-- hanging blue tube -->
<path d="M1466 83 V124 Q1466 128 1471 128 Q1476 128 1476 124 V83 Z" fill="none" stroke="#e8e8e8" stroke-width="1.2"/>
<path d="M1466.6 105 H1475.4 V124 Q1475.4 127.4 1471 127.4 Q1466.6 127.4 1466.6 124Z" fill="#2a98f5"/>
<!-- right flask -->
<path d="M1689 115 H1705 L1702 127 L1712 160 Q1713 164 1709 164 H1684 Q1680 164 1681 160 L1691 127 Z" fill="none" stroke="#e8e8e8" stroke-width="1.4"/>
<path d="M1686 144 Q1697 141 1707 144 L1712 160 Q1712.5 163 1709 163 H1684 Q1681 163 1681.5 160Z" fill="#67c63a"/>
<path d="M1694 113 L1700 104" stroke="#67c63a" stroke-width="1" opacity="0.7"/>
<!-- flame & burner -->
<path d="M1695 169 Q1702 178 1702 184 Q1702 191 1695 191 Q1688 191 1688 184 Q1688 177 1695 169Z" fill="#f5891c"/>
<path d="M1695 180 Q1698 184 1698 187 Q1698 190 1695 190 Q1692 190 1692 187 Q1692 184 1695 180Z" fill="#f4515e"/>
<rect x="1692" y="192" width="6" height="15" rx="3" fill="#9d9d9d"/>
<rect x="1693" y="205" width="4" height="25" fill="#cfcfcf"/>
<rect x="1679" y="229" width="33" height="5" rx="2.5" fill="#9d9d9d"/>
<rect x="1711" y="231" width="49" height="3" fill="#cfcfcf"/>
</g>
</svg>
<!-- subtitle -->
<div class="t" style="left:1042px;top:398.5px;width:797px;text-align:center;font-size:22px;line-height:26px;color:#fff;letter-spacing:-0.1px;-webkit-text-stroke:3.2px #000;paint-order:stroke fill;padding-left:3px">Lorem ipsum dolor sit amet, consectetur adipiscing elit.<br>Vivamus auctor id justor eu ultrices.</div>
<svg style="left:1042px;top:32px" width="797" height="447" viewBox="1042 32 797 447"><g clip-path="url(#vc)">
<!-- character -->
<ellipse cx="1187" cy="464" rx="55" ry="11" fill="#5b8381"/>
<rect x="1163" y="418" width="12" height="16" fill="#fcc49a"/><rect x="1199" y="418" width="12" height="16" fill="#fcc49a"/>
<path d="M1160 256 H1218 L1214 414 Q1213 425 1205 425 Q1197 425 1196.5 414 L1192 272 H1182 L1178 414 Q1178 425 1169.5 425 Q1161 425 1161 414 Z" fill="#0a68d8"/>

<path d="M1156 434 Q1158 428 1164 428 H1175 Q1180 430 1180 440 V462 Q1180 468 1172 468 H1160 Q1153 468 1154 460 Z" fill="#1f1f1f"/>
<path d="M1192 434 Q1194 428 1200 428 H1211 Q1216 430 1217 440 L1218 462 Q1218 468 1210 468 H1197 Q1190 468 1191 460 Z" fill="#1f1f1f"/>
<path d="M1160 254 L1173 256 L1174 290 Q1172 295 1168 292 L1163 290 Z" fill="#fcc49a"/>
<path d="M1230 250 L1219 253 L1217 286 Q1220 292 1224 288 L1228 285 Z" fill="#fcc49a"/>
<path d="M1155 155 Q1185 148 1222 154 L1218 256 H1160 Z" fill="#3228c4"/>
<path d="M1160 158 L1114 214 L1160 252" fill="none" stroke="#3228c4" stroke-width="17" stroke-linecap="round" stroke-linejoin="round"/>
<path d="M1215 158 L1262 205 L1227 250" fill="none" stroke="#3228c4" stroke-width="17" stroke-linecap="round" stroke-linejoin="round"/>
<path d="M1173 148 H1197 V155 Q1185 163 1173 155 Z" fill="#fcc49a"/>
<circle cx="1154" cy="113" r="4.5" fill="#fcc49a"/><circle cx="1215" cy="113" r="4.5" fill="#fcc49a"/>
<path d="M1156 88 Q1156 78 1166 76 H1212 V130 H1157 Z" fill="#fcc49a"/>
<path d="M1158 130 H1213 V137 Q1213 149 1200 149 H1171 Q1158 149 1158 137 Z" fill="#93461a"/>
<path d="M1175 124 Q1175 121 1180 121 H1190 Q1195 121 1195 124 V131 H1175Z" fill="#93461a"/>
<path d="M1178 125 H1192 Q1191 131 1185 131 Q1179 131 1178 125Z" fill="#3a1c0a"/><rect x="1180" y="125" width="10" height="2" fill="#fff"/>
<path d="M1165 66 H1198 Q1211 66 1211 80 V94 H1184 Q1168 92 1165 78 Z" fill="#93461a"/>
<path d="M1158 82 Q1158 74 1166 73 V84 L1160 88 Z" fill="#93461a"/>
<rect x="1162" y="104" width="14" height="3.5" rx="1.5" fill="#111"/><rect x="1191" y="103" width="14" height="3.5" rx="1.5" fill="#111"/>
<path d="M1163 112 Q1169 118 1175 112 M1192 112 Q1198 118 1204 112" stroke="#d79a72" stroke-width="1" fill="none"/>
<ellipse cx="1184" cy="112" rx="4" ry="6.5" fill="#f5946a"/>
</g></svg>
<svg style="left:962px;top:480px" width="958" height="73">
 <g fill="#d3d8de">
  <path d="M13 20 L23 14 V26.5 Z"/>
  <rect x="25" y="14" width="1.3" height="12.5"/>
  <rect x="51" y="14" width="1.3" height="12.5"/>
  <path d="M54 14 L64 20 L54 26.5Z"/>
  <path d="M89 14 L100 20 L89 26.5Z"/>
  <rect x="125" y="14" width="12" height="12"/>
 </g>
 <rect x="154" y="20" width="624" height="2" fill="#0b0d10"/>
 <rect x="154" y="20" width="59" height="2" fill="#5cd6c6"/>
 <circle cx="213" cy="21" r="5" fill="#5cd6c6"/>
 <g fill="none" stroke="#9a9fa6" stroke-width="1">
  <path d="M809 10 Q806.5 10 806.5 12.5 V15.5 Q806.5 17 804.5 17 Q806.5 17 806.5 18.5 V21.5 Q806.5 24 809 24"/>
  <path d="M824 10 Q826.5 10 826.5 12.5 V15.5 Q826.5 17 828.5 17 Q826.5 17 826.5 18.5 V21.5 Q826.5 24 824 24"/>
 </g>
 <rect x="850.5" y="3.5" width="97" height="27" fill="#0f1216" stroke="#2a3240" stroke-width="1"/>
 <g fill="none" stroke="#d3d8de" stroke-width="1.2">
  <path d="M839 51.5 H826.5 V40.5 H845.5 V46"/><path d="M835 51.5 V55 M831.5 55.5 H838"/>
  <circle cx="842" cy="52" r="2.2"/><circle cx="842" cy="52" r="4" stroke-dasharray="1.6 1.54" stroke-width="1.6"/>
  <rect x="862.5" y="43.5" width="14.5" height="10"/><path d="M866 43.5 L867.5 41.5 H872.5 L874 43.5"/><circle cx="869.8" cy="48.5" r="2.3" stroke-width="1.5"/>
  <path d="M907.5 44.5 Q909.5 47.5 907.5 50.5 M910 42.5 Q913 47.5 910 52.5" stroke="#c8ccd2"/>
 </g>
 <path d="M896.5 45 H899.5 L904.5 41.5 V53.5 L899.5 50 H896.5Z" fill="#c8ccd2"/>
 <g fill="none" stroke="#d3d8de" stroke-width="1.2">
  <path d="M932 40.5 L936 44.5 M932 40.5 V43.5 M932 40.5 H935"/>
  <path d="M944 40.5 L940 44.5 M944 40.5 V43.5 M944 40.5 H941"/>
  <path d="M932 53.5 L936 49.5 M932 53.5 V50.5 M932 53.5 H935"/>
  <path d="M944 53.5 L940 49.5 M944 53.5 V50.5 M944 53.5 H941"/>
 </g>
</svg>
<span class="t" style="left:1817.5px;top:492px;font-size:13px;color:#e6e8ea">00<i style="display:inline-block;width:9.7px;text-align:center;font-style:normal">:</i>00<i style="display:inline-block;width:9.7px;text-align:center;font-style:normal">:</i>00<i style="display:inline-block;width:9.7px;text-align:center;font-style:normal">:</i>22</span>
<!-- selection rect -->
<svg style="left:1030px;top:25px" width="300" height="465">
 <rect x="11.5" y="7.5" width="273" height="447" fill="none" stroke="#1a1a1a" stroke-width="1"/>
 <rect x="11.5" y="7.5" width="273" height="447" fill="none" stroke="#f0f0f0" stroke-width="1" stroke-dasharray="3 3"/>
 <g fill="#5cd6c6" stroke="#1a1a1a" stroke-width="0.8">
  <path d="M6 7 A5.5 5 0 0 0 17 7 Z"/><path d="M279 7 A5.5 5 0 0 0 290 7 Z"/>
  <path d="M6 455 A5.5 5 0 0 1 17 455 Z"/><path d="M279 455 A5.5 5 0 0 1 290 455 Z"/>
  <rect x="143.5" y="5" width="8" height="3"/><rect x="143.5" y="451" width="8" height="4"/>
  <rect x="7.5" y="227" width="8" height="8"/><rect x="280.5" y="227" width="8" height="8"/>
 </g>
</svg>

<!-- ============ TIMELINE ============ -->
<div class="a" style="left:0;top:553px;width:1920px;height:2px;background:#050607"></div>
<div class="a" style="left:0;top:555px;width:1920px;height:38px;background:#21262e"></div>
<div class="a" style="left:0;top:593px;width:1920px;height:2px;background:#0b0d10"></div>
<svg style="left:0;top:555px" width="1920" height="40" fill="none" stroke="#d3d8de" stroke-width="1.3" stroke-linecap="round" stroke-linejoin="round">
 <path d="M31 15 L26.5 20 L31 25 M27 20 H34 Q40 20 40 27"/>
 <path d="M78 15 L82.5 20 L78 25 M82 20 H75 Q70 20 70.5 27" stroke="#6f747b"/>
 <path d="M115 18.5 H128 M119 18.5 V16.5 H124 V18.5 M116.5 18.5 L117.5 26.5 H125.5 L126.5 18.5 M119.5 20.5 V24.5 M121.5 20.5 V24.5 M123.5 20.5 V24.5"/>
 <path d="M160.5 14.5 L168 25 M169.5 14.5 L162 25"/><circle cx="161.5" cy="26" r="1.8"/><circle cx="168.5" cy="26" r="1.8"/>
 <circle cx="209.5" cy="21" r="7" stroke="#6f747b"/><path d="M208.5 17.5 V22 H212" stroke="#6f747b"/>
 <path d="M247 15 H259 M247 20.5 H259 M247 25.5 H259"/>
</svg>
<svg style="left:0;top:555px" width="1920" height="40">
 <g fill="#d3d8de"><rect x="250.5" y="13" width="3" height="4" rx="1"/><rect x="248" y="18.5" width="3" height="4" rx="1"/><rect x="254" y="23.5" width="3" height="4" rx="1"/></g>
 <g fill="none" stroke="#d3d8de" stroke-width="1.3">
  <circle cx="1564.5" cy="20.5" r="7.5" stroke-dasharray="1.5 1.5" stroke-width="1.6"/>
  <path d="M1594.5 14 H1604.5 V25 L1599.5 28.5 L1594.5 25 Z"/>
  <rect x="1630.5" y="13.5" width="6" height="10" rx="3"/><path d="M1628.5 20 Q1628.5 26 1633.5 26 Q1638.5 26 1638.5 20 M1633.5 26 V29 M1630.5 29.5 H1636.5"/>
  <path d="M1661 14 H1670 M1661 17.5 H1670 M1661 21 H1668 M1661 24.5 H1666 M1672.5 13.5 V26"/>
  <rect x="1693.5" y="14.5" width="15.5" height="13" rx="1.5"/><path d="M1696.5 21 H1706 M1699 18.5 L1696.5 21 L1699 23.5 M1703.5 18.5 L1706 21 L1703.5 23.5"/>
  <circle cx="1734.5" cy="20.5" r="6.5"/><path d="M1731.5 20.5 H1737.5"/>
  <circle cx="1860.5" cy="20.5" r="6.5"/><path d="M1857.5 20.5 H1863.5 M1860.5 17.5 V23.5"/>
 </g>
 <circle cx="1670.5" cy="26" r="2.8" fill="#d3d8de"/><path d="M1562 16 L1568.5 20.5 L1562 25 Z" fill="#d3d8de"/>
 <rect x="1755" y="20" width="67" height="2" fill="#5d6874"/><rect x="1822" y="20" width="19" height="2" fill="#0b0d10"/>
 <circle cx="1822.5" cy="21" r="5" fill="#d3d8de"/>
 <rect x="1888.5" y="12.5" width="8" height="17" fill="#0f1114" stroke="#050607"/><rect x="1898.5" y="12.5" width="8" height="17" fill="#0f1114" stroke="#050607"/>
</svg>
<div class="a" style="left:0;top:595px;width:1920px;height:39px;background:#1c2028"></div>
<div class="a" style="left:0;top:634px;width:99px;height:55px;background:#1c2028"></div>
<div class="a" style="left:99px;top:634px;width:1px;height:401px;background:#16191e"></div>
<div class="a" style="left:100px;top:634px;width:1820px;height:55px;background:#1f232b"></div>
<svg style="left:0;top:595px" width="100" height="39" fill="none" stroke="#d3d8de" stroke-width="1.2">
 <path d="M9.5 23.5 V12 H22 V14"/><rect x="12.5" y="15.5" width="16" height="11"/><path d="M20.5 18 V24 M17.5 21 H23.5"/>
 <path d="M50 19 L47 22 Q45 24 47 26 Q49 28 51 26 L54 23 M53.5 20.5 L56.5 17.5 Q58.5 15.5 56.5 13.5 Q54.5 11.5 52.5 13.5 L49.5 16.5 M49.5 23.5 L54 19"/>
</svg>
<svg style="left:100px;top:595px" width="1820" height="39">
<rect x="0.0" y="25" width="1.2" height="10" fill="#8793a3"/>
<rect x="29.1" y="31" width="1.2" height="4" fill="#8793a3"/>
<rect x="58.2" y="31" width="1.2" height="4" fill="#8793a3"/>
<rect x="87.4" y="31" width="1.2" height="4" fill="#8793a3"/>
<rect x="116.5" y="31" width="1.2" height="4" fill="#8793a3"/>
<rect x="145.6" y="25" width="1.2" height="10" fill="#8793a3"/>
<rect x="174.7" y="31" width="1.2" height="4" fill="#8793a3"/>
<rect x="203.8" y="31" width="1.2" height="4" fill="#8793a3"/>
<rect x="233.0" y="31" width="1.2" height="4" fill="#8793a3"/>
<rect x="262.1" y="31" width="1.2" height="4" fill="#8793a3"/>
<rect x="291.2" y="25" width="1.2" height="10" fill="#8793a3"/>
<rect x="320.3" y="31" width="1.2" height="4" fill="#8793a3"/>
<rect x="349.4" y="31" width="1.2" height="4" fill="#8793a3"/>
<rect x="378.6" y="31" width="1.2" height="4" fill="#8793a3"/>
<rect x="407.7" y="31" width="1.2" height="4" fill="#8793a3"/>
<rect x="436.8" y="25" width="1.2" height="10" fill="#8793a3"/>
<rect x="465.9" y="31" width="1.2" height="4" fill="#8793a3"/>
<rect x="495.0" y="31" width="1.2" height="4" fill="#8793a3"/>
<rect x="524.2" y="31" width="1.2" height="4" fill="#8793a3"/>
<rect x="553.3" y="31" width="1.2" height="4" fill="#8793a3"/>
<rect x="582.4" y="25" width="1.2" height="10" fill="#8793a3"/>
<rect x="611.5" y="31" width="1.2" height="4" fill="#8793a3"/>
<rect x="640.6" y="31" width="1.2" height="4" fill="#8793a3"/>
<rect x="669.8" y="31" width="1.2" height="4" fill="#8793a3"/>
<rect x="698.9" y="31" width="1.2" height="4" fill="#8793a3"/>
<rect x="728.0" y="25" width="1.2" height="10" fill="#8793a3"/>
<rect x="757.1" y="31" width="1.2" height="4" fill="#8793a3"/>
<rect x="786.2" y="31" width="1.2" height="4" fill="#8793a3"/>
<rect x="815.4" y="31" width="1.2" height="4" fill="#8793a3"/>
<rect x="844.5" y="31" width="1.2" height="4" fill="#8793a3"/>
<rect x="873.6" y="25" width="1.2" height="10" fill="#8793a3"/>
<rect x="902.7" y="31" width="1.2" height="4" fill="#8793a3"/>
<rect x="931.8" y="31" width="1.2" height="4" fill="#8793a3"/>
<rect x="961.0" y="31" width="1.2" height="4" fill="#8793a3"/>
<rect x="990.1" y="31" width="1.2" height="4" fill="#8793a3"/>
<rect x="1019.2" y="25" width="1.2" height="10" fill="#8793a3"/>
<rect x="1048.3" y="31" width="1.2" height="4" fill="#8793a3"/>
<rect x="1077.4" y="31" width="1.2" height="4" fill="#8793a3"/>
<rect x="1106.6" y="31" width="1.2" height="4" fill="#8793a3"/>
<rect x="1135.7" y="31" width="1.2" height="4" fill="#8793a3"/>
<rect x="1164.8" y="25" width="1.2" height="10" fill="#8793a3"/>
<rect x="1193.9" y="31" width="1.2" height="4" fill="#8793a3"/>
<rect x="1223.0" y="31" width="1.2" height="4" fill="#8793a3"/>
<rect x="1252.2" y="31" width="1.2" height="4" fill="#8793a3"/>
<rect x="1281.3" y="31" width="1.2" height="4" fill="#8793a3"/>
<rect x="1310.4" y="25" width="1.2" height="10" fill="#8793a3"/>
<rect x="1339.5" y="31" width="1.2" height="4" fill="#8793a3"/>
<rect x="1368.6" y="31" width="1.2" height="4" fill="#8793a3"/>
<rect x="1397.8" y="31" width="1.2" height="4" fill="#8793a3"/>
<rect x="1426.9" y="31" width="1.2" height="4" fill="#8793a3"/>
<rect x="1456.0" y="25" width="1.2" height="10" fill="#8793a3"/>
<rect x="1485.1" y="31" width="1.2" height="4" fill="#8793a3"/>
<rect x="1514.2" y="31" width="1.2" height="4" fill="#8793a3"/>
<rect x="1543.4" y="31" width="1.2" height="4" fill="#8793a3"/>
<rect x="1572.5" y="31" width="1.2" height="4" fill="#8793a3"/>
<rect x="1601.6" y="25" width="1.2" height="10" fill="#8793a3"/>
<rect x="1630.7" y="31" width="1.2" height="4" fill="#8793a3"/>
<rect x="1659.8" y="31" width="1.2" height="4" fill="#8793a3"/>
<rect x="1689.0" y="31" width="1.2" height="4" fill="#8793a3"/>
<rect x="1718.1" y="31" width="1.2" height="4" fill="#8793a3"/>
<rect x="1747.2" y="25" width="1.2" height="10" fill="#8793a3"/>
<rect x="1776.3" y="31" width="1.2" height="4" fill="#8793a3"/>
<rect x="1805.4" y="31" width="1.2" height="4" fill="#8793a3"/>
<rect x="1834.6" y="31" width="1.2" height="4" fill="#8793a3"/>
<rect x="1863.7" y="31" width="1.2" height="4" fill="#8793a3"/>
<rect x="0" y="37" width="873" height="2" fill="#e8483f"/>
</svg>
<div class="a" style="left:100px;top:600px;width:1808px;height:25px;overflow:hidden"><span class="t tl" style="left:2.0px;top:8px">00<i style="display:inline-block;width:5.5px;text-align:center;font-style:normal">:</i>00<i style="display:inline-block;width:5.5px;text-align:center;font-style:normal">:</i>00<i style="display:inline-block;width:5.5px;text-align:center;font-style:normal">:</i>00</span><span class="t tl" style="left:147.6px;top:8px">00<i style="display:inline-block;width:5.5px;text-align:center;font-style:normal">:</i>00<i style="display:inline-block;width:5.5px;text-align:center;font-style:normal">:</i>01<i style="display:inline-block;width:5.5px;text-align:center;font-style:normal">:</i>00</span><span class="t tl" style="left:293.2px;top:8px">00<i style="display:inline-block;width:5.5px;text-align:center;font-style:normal">:</i>00<i style="display:inline-block;width:5.5px;text-align:center;font-style:normal">:</i>02<i style="display:inline-block;width:5.5px;text-align:center;font-style:normal">:</i>00</span><span class="t tl" style="left:438.8px;top:8px">00<i style="display:inline-block;width:5.5px;text-align:center;font-style:normal">:</i>00<i style="display:inline-block;width:5.5px;text-align:center;font-style:normal">:</i>03<i style="display:inline-block;width:5.5px;text-align:center;font-style:normal">:</i>00</span><span class="t tl" style="left:584.4px;top:8px">00<i style="display:inline-block;width:5.5px;text-align:center;font-style:normal">:</i>00<i style="display:inline-block;width:5.5px;text-align:center;font-style:normal">:</i>04<i style="display:inline-block;width:5.5px;text-align:center;font-style:normal">:</i>00</span><span class="t tl" style="left:730.0px;top:8px">00<i style="display:inline-block;width:5.5px;text-align:center;font-style:normal">:</i>00<i style="display:inline-block;width:5.5px;text-align:center;font-style:normal">:</i>05<i style="display:inline-block;width:5.5px;text-align:center;font-style:normal">:</i>00</span><span class="t tl" style="left:875.6px;top:8px">00<i style="display:inline-block;width:5.5px;text-align:center;font-style:normal">:</i>00<i style="display:inline-block;width:5.5px;text-align:center;font-style:normal">:</i>06<i style="display:inline-block;width:5.5px;text-align:center;font-style:normal">:</i>00</span><span class="t tl" style="left:1021.2px;top:8px">00<i style="display:inline-block;width:5.5px;text-align:center;font-style:normal">:</i>00<i style="display:inline-block;width:5.5px;text-align:center;font-style:normal">:</i>07<i style="display:inline-block;width:5.5px;text-align:center;font-style:normal">:</i>00</span><span class="t tl" style="left:1166.8px;top:8px">00<i style="display:inline-block;width:5.5px;text-align:center;font-style:normal">:</i>00<i style="display:inline-block;width:5.5px;text-align:center;font-style:normal">:</i>08<i style="display:inline-block;width:5.5px;text-align:center;font-style:normal">:</i>00</span><span class="t tl" style="left:1312.4px;top:8px">00<i style="display:inline-block;width:5.5px;text-align:center;font-style:normal">:</i>00<i style="display:inline-block;width:5.5px;text-align:center;font-style:normal">:</i>09<i style="display:inline-block;width:5.5px;text-align:center;font-style:normal">:</i>00</span><span class="t tl" style="left:1458.0px;top:8px">00<i style="display:inline-block;width:5.5px;text-align:center;font-style:normal">:</i>00<i style="display:inline-block;width:5.5px;text-align:center;font-style:normal">:</i>10<i style="display:inline-block;width:5.5px;text-align:center;font-style:normal">:</i>00</span><span class="t tl" style="left:1603.6px;top:8px">00<i style="display:inline-block;width:5.5px;text-align:center;font-style:normal">:</i>00<i style="display:inline-block;width:5.5px;text-align:center;font-style:normal">:</i>11<i style="display:inline-block;width:5.5px;text-align:center;font-style:normal">:</i>00</span><span class="t tl" style="left:1749.2px;top:8px">00<i style="display:inline-block;width:5.5px;text-align:center;font-style:normal">:</i>00<i style="display:inline-block;width:5.5px;text-align:center;font-style:normal">:</i>12<i style="display:inline-block;width:5.5px;text-align:center;font-style:normal">:</i>00</span></div>
<div class="a" style="left:0;top:689px;width:99px;height:168px;background:#1f232b"></div>
<div class="a" style="left:0;top:857px;width:99px;height:106px;background:#161920"></div>
<div class="a" style="left:0;top:963px;width:99px;height:56px;background:#1f232b"></div>
<div class="a" style="left:0;top:1019px;width:1920px;height:16px;background:#1f232b"></div>
<div class="a" style="left:0;top:745px;width:99px;height:1px;background:#16191e"></div>
<div class="a" style="left:0;top:801px;width:99px;height:1px;background:#16191e"></div>
<div class="a" style="left:100px;top:689px;width:1806px;height:56px;background:#171a21"></div>
<div class="a" style="left:100px;top:745px;width:1806px;height:56px;background:#1f232b"></div>
<div class="a" style="left:100px;top:801px;width:1806px;height:56px;background:#191c23"></div>
<div class="a" style="left:100px;top:857px;width:1806px;height:106px;background:#15181f"></div>
<div class="a" style="left:100px;top:963px;width:1806px;height:56px;background:#191c23"></div>
<div class="a" style="left:1906px;top:634px;width:14px;height:393px;background:#1b1e24"></div>
<div class="a" style="left:1907px;top:634px;width:10px;height:372px;background:#566478;border-radius:3px"></div>
<div class="a" style="left:101px;top:1027px;width:998px;height:8px;background:#566478;border-radius:2px 2px 0 0"></div>
<svg style="left:0;top:707px" width="99" height="20" fill="none" stroke="#d3d8de" stroke-width="1"><rect x="9.5" y="4.5" width="12" height="12"/><path d="M12.5 4.5 V16.5 M18.5 4.5 V16.5 M9.5 7.5 H12.5 M9.5 10.5 H12.5 M9.5 13.5 H12.5 M18.5 7.5 H21.5 M18.5 10.5 H21.5 M18.5 13.5 H21.5"/><path d="M14.5 8.5 L17 10.5 L14.5 12.5Z" fill="#d3d8de" stroke="none"/></svg><svg style="left:0;top:707px" width="99" height="20"><path d="M69 10.5 Q76.5 3 84 10.5 Q76.5 18 69 10.5Z" fill="#d3d8de"/><circle cx="76.5" cy="10.5" r="2.8" fill="#1f232b"/><circle cx="77.3" cy="9.8" r="1.2" fill="#d3d8de"/><path d="M48 9.5 V7 Q48 4 51 4 Q54 4 54 6.5" fill="none" stroke="#d3d8de" stroke-width="1.6"/><rect x="47" y="9.5" width="11" height="8" fill="#d3d8de"/><rect x="51.5" y="12" width="2" height="3" fill="#1f232b"/></svg><span class="t tn" style="left:26px;margin-top:3px;top:710px">4</span>
<svg style="left:0;top:763px" width="99" height="20" fill="none" stroke="#d3d8de" stroke-width="1"><rect x="9.5" y="4.5" width="12" height="12"/><path d="M12.5 4.5 V16.5 M18.5 4.5 V16.5 M9.5 7.5 H12.5 M9.5 10.5 H12.5 M9.5 13.5 H12.5 M18.5 7.5 H21.5 M18.5 10.5 H21.5 M18.5 13.5 H21.5"/><path d="M14.5 8.5 L17 10.5 L14.5 12.5Z" fill="#d3d8de" stroke="none"/></svg><svg style="left:0;top:763px" width="99" height="20"><path d="M69 10.5 Q76.5 3 84 10.5 Q76.5 18 69 10.5Z" fill="#d3d8de"/><circle cx="76.5" cy="10.5" r="2.8" fill="#1f232b"/><circle cx="77.3" cy="9.8" r="1.2" fill="#d3d8de"/><path d="M48 9.5 V7 Q48 4 51 4 Q54 4 54 6.5" fill="none" stroke="#d3d8de" stroke-width="1.6"/><rect x="47" y="9.5" width="11" height="8" fill="#d3d8de"/><rect x="51.5" y="12" width="2" height="3" fill="#1f232b"/></svg><span class="t tn" style="left:26px;margin-top:3px;top:766px">3</span>
<svg style="left:0;top:819px" width="99" height="20" fill="none" stroke="#d3d8de" stroke-width="1"><rect x="9.5" y="4.5" width="12" height="12"/><path d="M12.5 4.5 V16.5 M18.5 4.5 V16.5 M9.5 7.5 H12.5 M9.5 10.5 H12.5 M9.5 13.5 H12.5 M18.5 7.5 H21.5 M18.5 10.5 H21.5 M18.5 13.5 H21.5"/><path d="M14.5 8.5 L17 10.5 L14.5 12.5Z" fill="#d3d8de" stroke="none"/></svg><svg style="left:0;top:819px" width="99" height="20"><path d="M69 10.5 Q76.5 3 84 10.5 Q76.5 18 69 10.5Z" fill="#d3d8de"/><circle cx="76.5" cy="10.5" r="2.8" fill="#1f232b"/><circle cx="77.3" cy="9.8" r="1.2" fill="#d3d8de"/><path d="M48 9.5 V7 Q48 4 51 4 Q54 4 54 6.5" fill="none" stroke="#d3d8de" stroke-width="1.6"/><rect x="47" y="9.5" width="11" height="8" fill="#d3d8de"/><rect x="51.5" y="12" width="2" height="3" fill="#1f232b"/></svg><span class="t tn" style="left:26px;margin-top:3px;top:822px">2</span>
<svg style="left:0;top:900px" width="99" height="20" fill="none" stroke="#d3d8de" stroke-width="1"><rect x="9.5" y="4.5" width="12" height="12"/><path d="M12.5 4.5 V16.5 M18.5 4.5 V16.5 M9.5 7.5 H12.5 M9.5 10.5 H12.5 M9.5 13.5 H12.5 M18.5 7.5 H21.5 M18.5 10.5 H21.5 M18.5 13.5 H21.5"/><path d="M14.5 8.5 L17 10.5 L14.5 12.5Z" fill="#d3d8de" stroke="none"/></svg><svg style="left:0;top:900px" width="99" height="20"><path d="M69 10.5 Q76.5 3 84 10.5 Q76.5 18 69 10.5Z" fill="#d3d8de"/><circle cx="76.5" cy="10.5" r="2.8" fill="#1f232b"/><circle cx="77.3" cy="9.8" r="1.2" fill="#d3d8de"/><path d="M48 9.5 V7 Q48 4 51 4 Q54 4 54 6.5" fill="none" stroke="#d3d8de" stroke-width="1.6"/><rect x="47" y="9.5" width="11" height="8" fill="#d3d8de"/><rect x="51.5" y="12" width="2" height="3" fill="#1f232b"/></svg><span class="t tn" style="left:26px;margin-top:3px;top:903px">1</span>
<svg style="left:0;top:981px" width="99" height="20" fill="none" stroke="#d3d8de" stroke-width="1"><path d="M13.5 15 V4.5 L20.5 3.5 V13" stroke-width="1.2"/><circle cx="12" cy="15.5" r="1.6" fill="#d3d8de"/><circle cx="19" cy="13.5" r="1.6" fill="#d3d8de"/></svg><svg style="left:0;top:981px" width="99" height="20"><path d="M69 7.5 H72 L76 4 V16 L72 12.5 H69Z" fill="#d3d8de"/><path d="M78.5 7 Q80.5 10 78.5 13 M81 5.5 Q84 10 81 14.5" fill="none" stroke="#d3d8de" stroke-width="1.1"/><path d="M48 9.5 V7 Q48 4 51 4 Q54 4 54 6.5" fill="none" stroke="#d3d8de" stroke-width="1.6"/><rect x="47" y="9.5" width="11" height="8" fill="#d3d8de"/><rect x="51.5" y="12" width="2" height="3" fill="#1f232b"/></svg><span class="t tn" style="left:26px;margin-top:3px;top:984px">1</span>
<!-- clips -->
<div class="a" style="left:100px;top:689px;width:873px;height:56px;background:#4a679c;border:2px solid #b0ccf4"></div>
<svg style="left:100px;top:689px;overflow:hidden" width="873" height="56" viewBox="100 689 873 56"><defs><symbol id="tchar" width="16" height="48" viewBox="0 0 16 48" overflow="visible"><ellipse cx="8" cy="49" rx="7" ry="1.5" fill="#3a5078"/><path d="M4.5 25 H11.5 L11 46 H8.8 L8 29 L7.2 46 H5 Z" fill="#1a6fe0"/><rect x="4.3" y="45.5" width="3" height="4" rx="1" fill="#222"/><rect x="8.7" y="45.5" width="3" height="4" rx="1" fill="#222"/><path d="M3.5 14 H12.5 L12 25.5 H4 Z" fill="#3524c8"/><path d="M4 15 L0.8 20 L4 24.5 M12 15 L15.2 20 L12 24.5" stroke="#3524c8" stroke-width="2.2" fill="none" stroke-linejoin="round"/><rect x="3.3" y="24" width="1.6" height="4" fill="#f6bd8c"/><rect x="11.1" y="24" width="1.6" height="4" fill="#f6bd8c"/><rect x="5" y="5" width="6" height="8" rx="1" fill="#f6bd8c"/><path d="M5 7 Q5 3 8 3 Q11 3 11 7 V6 H5Z" fill="#93471c"/><path d="M5 10 H11 V12 Q11 14.5 8 14.5 Q5 14.5 5 12Z" fill="#8f4418"/></symbol></defs><use href="#tchar" x="136.5" y="691"/><use href="#tchar" x="223.5" y="691"/><use href="#tchar" x="310.5" y="691"/><use href="#tchar" x="397.5" y="691"/><use href="#tchar" x="484.5" y="691"/><use href="#tchar" x="571.5" y="691"/><use href="#tchar" x="658.5" y="691"/><use href="#tchar" x="745.5" y="691"/><use href="#tchar" x="832.5" y="691"/><use href="#tchar" x="919.5" y="691"/></svg>
<span class="t" style="left:104px;top:694px;font-size:12px;color:#fff;text-shadow:0 0 1px #000">角色<span class="m" style="font-size:11px;letter-spacing:-1px">1</span>装备<span class="m" style="font-size:11px;letter-spacing:-1px">3</span>笑</span>
<div class="a" style="left:100px;top:746px;width:728px;height:54px;background:#7159a0;border:1px solid #9c84d0;border-left-width:2px"></div>
<div class="a" style="left:103px;top:748px;width:12px;height:14px;background:#d3d6da"></div>
<span class="t" style="left:105px;top:749px;font-family:'Liberation Serif',serif;font-weight:bold;font-size:13px;color:#222">T</span>
<span class="t" style="left:121px;top:750px;font-size:12px;color:#fff;text-shadow:0 0 1px #000">字幕<span class="m" style="font-size:11px;letter-spacing:-1px">2</span></span>
<div class="a" style="left:100px;top:802px;width:1456px;height:54px;background:#7aa09e;border:2px solid #5f7fc6"></div>
<svg style="left:102px;top:804px;overflow:hidden" width="1452" height="50" viewBox="102 804 1452 50"><defs><symbol id="tbg" width="87" height="50" viewBox="0 0 87 50" overflow="visible"><rect x="-2" y="32" width="91" height="20" fill="#67908e"/><rect x="27" y="19.5" width="55" height="2" fill="#b3b3b3"/><rect x="27.5" y="21" width="54" height="22" fill="#e5e5e5"/><rect x="28" y="43" width="52" height="2" fill="#b0b0b0"/><rect x="43" y="7" width="1" height="13" fill="#cfcfcf"/><rect x="60" y="5" width="1" height="15" fill="#cfcfcf"/><rect x="34" y="11" width="9" height="1" fill="#cfcfcf"/><rect x="38" y="6" width="2.5" height="3" fill="#67c63a"/><rect x="33" y="14" width="3" height="3" fill="#f36b86"/><rect x="48" y="15" width="1.5" height="4" fill="#4a3ec4"/><rect x="50" y="13" width="1.5" height="6" fill="#2a98f5"/><rect x="52" y="14" width="1.5" height="5" fill="#f36b86"/><rect x="54" y="12" width="2" height="7" fill="#fdbb1e"/><rect x="56.5" y="13" width="2" height="6" fill="#67c63a"/><rect x="48" y="4" width="1" height="4" fill="#2a98f5"/><rect x="69" y="9" width="3" height="3" fill="#67c63a"/><rect x="70" y="12.5" width="1.5" height="2" fill="#f5891c"/></symbol></defs><use href="#tbg" x="102" y="804"/><use href="#tbg" x="189" y="804"/><use href="#tbg" x="276" y="804"/><use href="#tbg" x="363" y="804"/><use href="#tbg" x="450" y="804"/><use href="#tbg" x="537" y="804"/><use href="#tbg" x="624" y="804"/><use href="#tbg" x="711" y="804"/><use href="#tbg" x="798" y="804"/><use href="#tbg" x="885" y="804"/><use href="#tbg" x="972" y="804"/><use href="#tbg" x="1059" y="804"/><use href="#tbg" x="1146" y="804"/><use href="#tbg" x="1233" y="804"/><use href="#tbg" x="1320" y="804"/><use href="#tbg" x="1407" y="804"/><use href="#tbg" x="1494" y="804"/></svg>
<span class="t" style="left:104px;top:806px;font-size:12px;color:#fff;text-shadow:0 0 1px #000">背景<span class="m" style="font-size:11px;letter-spacing:-1px">13</span></span>
<!-- overlays -->
<div class="a" style="left:297px;top:29px;width:98px;height:66px;border:3px solid #e8483f"></div>
<div class="a" style="left:28px;top:230px;width:92px;height:27px;border:3px solid #e8483f"></div>
<div class="a" style="left:215.5px;top:600px;width:1.5px;height:427px;background:#f0504a"></div>
<svg style="left:205px;top:594px" width="25" height="20"><path d="M4 0 H18 V8 L11 15.5 L4 8 Z" fill="#f0504a"/></svg>
<div class="a" style="left:207px;top:706px;width:20px;height:38px;background:#f2584e;border-radius:10px"></div>
<svg style="left:207px;top:706px" width="20" height="38" fill="none" stroke="#fff" stroke-width="1.1"><path d="M5.5 12 L13 24 M14.5 12 L7 24"/><circle cx="6" cy="26" r="1.8"/><circle cx="14" cy="26" r="1.8"/></svg>
<svg style="left:0;top:0" width="1920" height="1035"><path d="M487 503 L432 667" stroke="#e8483f" stroke-width="3" stroke-linecap="round"/><path d="M427 678.5 L425 664.5 L438 669 Z" fill="#e8483f" stroke="#e8483f" stroke-width="1" stroke-linejoin="round"/></svg>
</body></html>
